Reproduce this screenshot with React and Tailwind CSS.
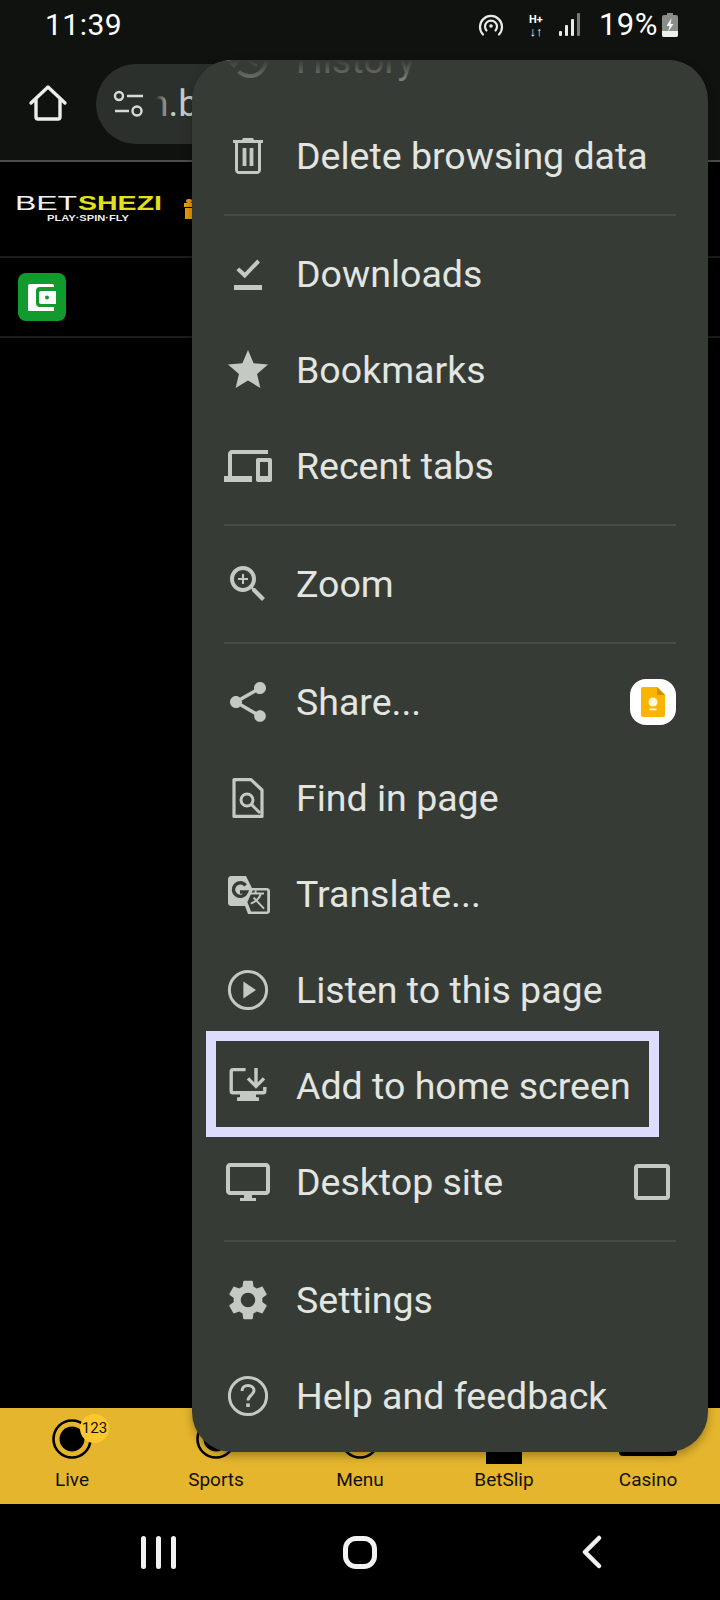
const Ic = ({ children, className = "" }) => (
  <svg viewBox="0 0 24 24" className={`w-12 h-12 shrink-0 ${className}`} fill="currentColor">{children}</svg>
);

const icons = {
  history: <path d="M13 3c-4.97 0-9 4.03-9 9H1l3.89 3.89.07.14L9 12H6c0-3.87 3.13-7 7-7s7 3.13 7 7-3.13 7-7 7c-1.93 0-3.68-.79-4.94-2.06l-1.42 1.42C8.27 19.99 10.51 21 13 21c4.97 0 9-4.03 9-9s-4.03-9-9-9zm-1 5v5l4.28 2.54.72-1.21-3.5-2.08V8H12z" />,
  trash: <path fillRule="evenodd" d="M9.5 3h5l.5 1h4.5v1.5h-1V19c0 1.1-.9 2-2 2h-9c-1.1 0-2-.9-2-2V5.500h-1V4H9zM7 5.500V19.500h10V5.500zM9.300 8h1.900v9H9.300zm3.500 0h1.900v9h-1.900z" />,
  downloads: <path d="M16.600 3.300 18 4.700l-7.600 7.900-4.200-4 1.400-1.400 2.800 2.600zM5 16h14v2.500H5z" transform="translate(0 1.500)" />,
  star: <path d="M12 17.270 18.180 21l-1.640-7.030L22 9.240l-7.190-.610L12 2 9.190 8.630 2 9.240l5.460 4.730L5.820 21z" />,
  devices: <path d="M4 6h18V4H4c-1.100 0-2 .9-2 2v11H0v3h14v-3H4V6zm19 2h-6c-.55 0-1 .45-1 1v10c0 .55.45 1 1 1h6c.55 0 1-.45 1-1V9c0-.55-.45-1-1-1zm-1 9h-4v-7h4v7z" />,
  zoom: <path d="M15.500 14h-.79l-.28-.27C15.410 12.590 16 11.110 16 9.500 16 5.910 13.090 3 9.500 3S3 5.910 3 9.500 5.910 16 9.500 16c1.610 0 3.090-.59 4.230-1.570l.27.28v.79l5 4.990L20.490 19l-4.990-5zm-6 0C7.010 14 5 11.990 5 9.500S7.010 5 9.500 5 14 7.010 14 9.500 11.990 14 9.500 14zM12 10h-2v2H9v-2H7V9h2V7h1v2h2z" />,
  share: <path d="M18 16.080c-.76 0-1.440.3-1.960.77L8.910 12.700c.05-.23.09-.46.09-.7s-.04-.47-.09-.7l7.050-4.110c.54.5 1.250.81 2.040.81 1.660 0 3-1.340 3-3s-1.340-3-3-3-3 1.340-3 3c0 .24.04.47.09.7L8.040 9.810C7.500 9.310 6.790 9 6 9c-1.660 0-3 1.340-3 3s1.340 3 3 3c.79 0 1.500-.31 2.040-.81l7.120 4.160c-.05.21-.08.43-.08.65 0 1.610 1.310 2.920 2.920 2.920 1.610 0 2.920-1.310 2.920-2.920s-1.310-2.920-2.920-2.920z" />,
  find: (
    <g fill="none" stroke="currentColor">
      <path strokeWidth="1.600" strokeLinejoin="round" d="M5 2.800h8.500L19 8v13.200H5z" />
      <circle cx="11.500" cy="13" r="3" strokeWidth="1.500" />
      <path strokeWidth="1.500" d="m13.700 15.200 4.300 4.300" />
    </g>
  ),
  translate: (
    <g>
      <path d="M2 4.500c0-.8.7-1.500 1.500-1.500H11l3 6h7.500c.8 0 1.500.7 1.500 1.500v10c0 .8-.7 1.500-1.500 1.500H12l-1.500-4H3.500C2.700 18 2 17.300 2 16.500z" />
      <path fill="#363b36" d="M14.300 10.300H21.600V20.700H13.500L11.700 16z" />
      <g fill="none" stroke="#363b36" strokeWidth="1.700">
        <path d="M10.800 7.700A3.400 3.400 0 1 0 11.300 11H8" />
      </g>
      <g fill="none" stroke="currentColor" strokeWidth="1">
        <path d="M12.500 11.800h7.500M15.800 10.300v1.500M18.400 11.800c-.6 2.500-2.500 4-5 5M14.800 13.800l5.200 5.500" />
      </g>
    </g>
  ),
  play: (
    <g>
      <circle cx="12" cy="12" r="9.300" fill="none" stroke="currentColor" strokeWidth="1.500" />
      <path d="M9.700 7.800v8.400l6.300-4.200z" />
    </g>
  ),
  install: (
    <g>
      <path fill="none" stroke="currentColor" strokeWidth="1.700" d="M10.800 3.800H4.500c-.5 0-.9.4-.9.9v9.800c0 .5.400.9.900.9h15c.5 0 .9-.4.9-.9v-2" />
      <path d="M8 16h8v1.500l1.500.3V19.500h-11v-1.700l1.500-.3z" />
      <path fill="none" stroke="currentColor" strokeWidth="1.700" d="M16 3v8.500M12 8.200l4 4 4-4" />
    </g>
  ),
  desktop: <path d="M21 3H3c-1.100 0-2 .9-2 2v12c0 1.100.9 2 2 2h7v1.500H8V22h8v-1.500h-2V19h7c1.100 0 2-.9 2-2V5c0-1.100-.9-2-2-2zm0 14H3V5h18z" transform="translate(0 -.5)" />,
  settings: <path d="M19.140 12.940c.04-.3.06-.61.06-.94 0-.32-.02-.64-.07-.94l2.030-1.580c.18-.14.23-.41.12-.61l-1.920-3.320c-.12-.22-.37-.29-.59-.22l-2.390.96c-.5-.38-1.030-.7-1.620-.94l-.36-2.540c-.04-.24-.24-.41-.48-.41h-3.840c-.24 0-.43.17-.47.41l-.36 2.540c-.59.24-1.130.57-1.620.94l-2.390-.96c-.22-.08-.47 0-.59.22L2.740 8.870c-.12.21-.08.47.12.61l2.030 1.580c-.05.3-.09.63-.09.94s.02.64.07.94l-2.030 1.580c-.18.14-.23.41-.12.61l1.920 3.320c.12.22.37.29.59.22l2.390-.96c.5.38 1.030.7 1.620.94l.36 2.540c.05.24.24.41.48.41h3.840c.24 0 .44-.17.47-.41l.36-2.540c.59-.24 1.130-.56 1.620-.94l2.390.96c.22.08.47 0 .59-.22l1.920-3.320c.12-.22.07-.47-.12-.61l-2.010-1.580zM12 15.600c-1.980 0-3.600-1.620-3.600-3.600s1.620-3.600 3.600-3.600 3.600 1.620 3.600 3.600-1.620 3.600-3.600 3.600z" />,
  help: (
    <g>
      <circle cx="12" cy="12" r="9.300" fill="none" stroke="currentColor" strokeWidth="1.500" />
      <path fill="none" stroke="currentColor" strokeWidth="1.500" d="M9 9.500c0-1.700 1.300-2.800 3-2.800s3 1.100 3 2.600c0 2.200-3 2.300-3 5" />
      <rect x="11.100" y="15.700" width="1.800" height="1.800" />
    </g>
  ),
};

const rows = [
  { icon: "history", label: "History" },
  { icon: "trash", label: "Delete browsing data" },
  { divider: true },
  { icon: "downloads", label: "Downloads" },
  { icon: "star", label: "Bookmarks" },
  { icon: "devices", label: "Recent tabs" },
  { divider: true },
  { icon: "zoom", label: "Zoom" },
  { divider: true },
  { icon: "share", label: "Share...", keep: true },
  { icon: "find", label: "Find in page" },
  { icon: "translate", label: "Translate..." },
  { icon: "play", label: "Listen to this page" },
  { icon: "install", label: "Add to home screen", marked: true },
  { icon: "desktop", label: "Desktop site", check: true },
  { divider: true },
  { icon: "settings", label: "Settings" },
  { icon: "help", label: "Help and feedback" },
];

function KeepIcon() {
  return (
    <div className="w-[46px] h-[46px] rounded-[16px] bg-white flex items-center justify-center">
      <svg viewBox="0 0 24 30" className="w-[24px] h-[34px]">
        <path d="M2 0h14l8 8v20a2 2 0 0 1-2 2H2a2 2 0 0 1-2-2V2a2 2 0 0 1 2-2z" fill="#fbb500" />
        <path d="M16 0l8 8h-8z" fill="#d98a00" />
        <circle cx="12" cy="15" r="4.500" fill="#fff6dc" />
        <rect x="8.500" y="21.500" width="7" height="1.800" fill="#fff6dc" />
      </svg>
    </div>
  );
}

function Menu() {
  return (
    <div className="absolute left-[192px] top-[60px] w-[516px] h-[1392px] rounded-[40px] overflow-hidden bg-[#363b36] shadow-[0_4px_10px_rgba(0,0,0,0.3)]">
      <div className="-mt-[48px] px-[32px]">
        {rows.map((r, i) =>
          r.divider ? (
            <div key={i} className="h-[22px] flex items-center">
              <div className="h-[2px] w-full bg-[#474c47]" />
            </div>
          ) : (
            <div key={i} className="relative h-[96px] flex items-center text-[#c4cac3]">
              <Ic>{icons[r.icon]}</Ic>
              <span className="ml-[24px] flex-1 text-[37.5px] text-[#e2e5e0] font-['Roboto',sans-serif]">{r.label}</span>
              {r.keep && <KeepIcon />}
              {r.check && <div className="w-[36px] h-[36px] mr-[6px] rounded-[4px] border-[4px] border-[#c4cac3]" />}
              {r.marked && (
                <div className="absolute -left-[18px] top-[-7px] w-[453px] h-[106px] border-[10px] border-[#dcdcff]" />
              )}
            </div>
          )
        )}
      </div>
      {/* fading edge over the scrolled row */}
      <div className="absolute left-0 right-0 top-0 h-[30px] bg-gradient-to-b from-[#363b36] to-[#363b3666]" />
    </div>
  );
}

function StatusBar() {
  return (
    <div className="h-[60px] flex items-center pl-[45px] pr-[42px] text-white font-['Roboto',sans-serif]">
      <span className="text-[30px] tracking-[0.5px] -mt-[11px]">11:39</span>
      <div className="ml-auto flex items-center -mt-[11px]">
        <svg viewBox="0 0 26 24" className="w-[26px] h-[24px]" fill="none" stroke="#e8ebe8" strokeWidth="2.200" strokeLinecap="round">
          <path d="M5 21.500A11 11 0 1 1 21 21.500" />
          <path d="M8.500 17.500a6 6 0 1 1 9 0" />
          <circle cx="13" cy="13" r="1.800" fill="#e8ebe8" stroke="none" />
        </svg>
        <div className="ml-[22px] w-[20px] flex flex-col items-center leading-none text-[11px] font-bold">
          <span className="h-[11px]">H+</span>
          <span className="h-[11px] text-[13px]">↓↑</span>
        </div>
        <svg viewBox="0 0 22 24" className="ml-[13px] w-[22px] h-[24px]" fill="#e8ebe8">
          <rect x="0" y="18" width="3" height="5" rx="1" />
          <rect x="6" y="12" width="3" height="11" rx="1" />
          <rect x="12" y="6" width="3" height="17" rx="1" />
          <rect x="18" y="0" width="3" height="23" rx="1" fill="#777b77" />
        </svg>
        <span className="ml-[18px] text-[31px] tracking-[0.5px] leading-none">19%</span>
        <svg viewBox="0 0 16 24" className="ml-[4px] w-[16px] h-[24px]">
          <path d="M5 0h6v2h3a2 2 0 0 1 2 2v18a2 2 0 0 1-2 2H2a2 2 0 0 1-2-2V4a2 2 0 0 1 2-2h3z" fill="#8a8e8a" />
          <path d="M0 18h16v4a2 2 0 0 1-2 2H2a2 2 0 0 1-2-2z" fill="#eef0ee" />
          <path d="M9.500 5 4.500 13h3l-1.500 6 5.500-8h-3z" fill="#f4f5f4" />
        </svg>
      </div>
    </div>
  );
}

function Toolbar() {
  return (
    <div className="h-[100px] flex items-start pl-[28px] pt-[4px]">
      <svg viewBox="0 0 40 40" className="w-[40px] h-[40px] mt-[20px]" fill="none" stroke="#eceeec" strokeWidth="3.400" strokeLinejoin="round" strokeLinecap="round">
        <path d="M3 19 20 3l17 16M8 15v18a2 2 0 0 0 2 2h20a2 2 0 0 0 2-2V15" />
      </svg>
      <div className="ml-[28px] w-[500px] h-[80px] rounded-[40px] bg-[#2c302c] flex items-center pl-[17px] overflow-hidden">
        <svg viewBox="0 0 32 28" className="w-[32px] h-[28px]" fill="none" stroke="#d8dcd8" strokeWidth="2.400">
          <circle cx="6" cy="6" r="4" />
          <path d="M14 6h16M2 21h14" />
          <circle cx="24" cy="21" r="4.500" />
        </svg>
        <div className="relative ml-[11px] w-[60px] h-[40px] overflow-hidden text-[37px] leading-[40px] text-[#c4cac3] font-['Roboto',sans-serif]">
          <span className="absolute -left-[8px] top-[0px]">n.b</span>
          <div className="absolute left-0 top-0 w-[14px] h-full bg-gradient-to-r from-[#2c302c] to-transparent" />
        </div>
      </div>
    </div>
  );
}

function Logo() {
  return (
    <svg viewBox="0 0 148 28" className="w-[148px] h-[28px]" fontFamily="'Liberation Sans',sans-serif">
      <text x="0" y="15" fontSize="20" fill="#f2f2f2" textLength="62" lengthAdjust="spacingAndGlyphs">BET</text>
      <text x="63" y="15" fontSize="20" fontWeight="700" fill="#e0e01c" textLength="84" lengthAdjust="spacingAndGlyphs">SHEZI</text>
      <text x="32" y="26" fontSize="9.500" fontWeight="700" fill="#eeeeee" textLength="82" lengthAdjust="spacingAndGlyphs">PLAY·SPIN·FLY</text>
    </svg>
  );
}

function NavItem({ label, children }) {
  return (
    <div className="relative flex flex-col items-center">
      <div className="h-[60px] w-full flex items-center justify-center pt-[2px]">{children}</div>
      <span className="text-[19px] leading-[24px] text-[#111] font-['Roboto',sans-serif]">{label}</span>
    </div>
  );
}

const Ring = () => (
  <svg viewBox="0 0 40 40" className="w-[40px] h-[40px]">
    <circle cx="20" cy="20" r="18.500" fill="none" stroke="#000" strokeWidth="2.600" />
    <circle cx="20" cy="20" r="12.500" fill="#000" />
  </svg>
);

export default function App() {
  return (
    <div className="relative w-[720px] h-[1600px] overflow-hidden bg-black flex flex-col">
      <div className="bg-[#0f120f] border-b-2 border-[#4a4d4a]">
        <StatusBar />
        <Toolbar />
      </div>

      <div className="h-[96px] border-b-2 border-[#1c1c1c] flex items-center pl-[15px]">
        <Logo />
        <svg viewBox="0 0 10 20" className="ml-[21px] w-[10px] h-[20px]" fill="#e79a0c">
          <rect x="2" y="0" width="6" height="4" rx="2" />
          <rect x="0" y="4" width="10" height="4" />
          <rect x="1" y="9" width="9" height="11" />
        </svg>
      </div>
      <div className="h-[80px] border-b-2 border-[#1c1c1c] flex items-center pl-[18px]">
        <div className="w-[48px] h-[48px] rounded-[8px] bg-[#129a2d] flex items-center justify-center">
          <svg viewBox="0 0 28 28" className="w-[28px] h-[28px]">
            <path d="M2 0h22a2 2 0 0 1 2 2v1H12a4 4 0 0 0-4 4v12a4 4 0 0 0 4 4h14v3a2 2 0 0 1-2 2H2a2 2 0 0 1-2-2V2a2 2 0 0 1 2-2z" fill="#fff" transform="translate(0 1)" />
            <path d="M13 8h15v13H13a2 2 0 0 1-2-2V10a2 2 0 0 1 2-2z" fill="#fff" />
            <circle cx="19" cy="14.500" r="2" fill="#129a2d" />
          </svg>
        </div>
      </div>

      <div className="flex-1 bg-black" />

      <div className="h-[96px] bg-[#e5b62d] grid grid-cols-5">
        <NavItem label="Live">
          <Ring />
          <div className="absolute left-[80px] top-[6px] w-[29px] h-[29px] rounded-full bg-[#fdc82f] flex items-center justify-center text-[15px] text-[#111] font-['Roboto',sans-serif]">123</div>
        </NavItem>
        <NavItem label="Sports"><Ring /></NavItem>
        <NavItem label="Menu"><Ring /></NavItem>
        <NavItem label="BetSlip"><div className="w-[36px] h-[52px] bg-black mt-[-2px]" /></NavItem>
        <NavItem label="Casino"><div className="w-[58px] h-[44px] rounded-[4px] bg-black -mt-[10px]" /></NavItem>
      </div>

      <div className="h-[96px] bg-black grid grid-cols-3 items-center text-[#f2f2f2]">
        <div className="flex justify-center gap-[10px] pl-[77px]">
          <div className="w-[5px] h-[33px] rounded-full bg-[#f2f2f2]" />
          <div className="w-[5px] h-[33px] rounded-full bg-[#f2f2f2]" />
          <div className="w-[5px] h-[33px] rounded-full bg-[#f2f2f2]" />
        </div>
        <div className="flex justify-center">
          <div className="w-[34px] h-[33px] rounded-[13px] border-[5px] border-[#f2f2f2]" />
        </div>
        <div className="flex justify-center pr-[16px]">
          <svg viewBox="0 0 22 34" className="w-[22px] h-[34px]" fill="none" stroke="#f2f2f2" strokeWidth="4.500" strokeLinecap="round" strokeLinejoin="round">
            <path d="M18 3 4 17l14 14" />
          </svg>
        </div>
      </div>

      <Menu />
    </div>
  );
}
